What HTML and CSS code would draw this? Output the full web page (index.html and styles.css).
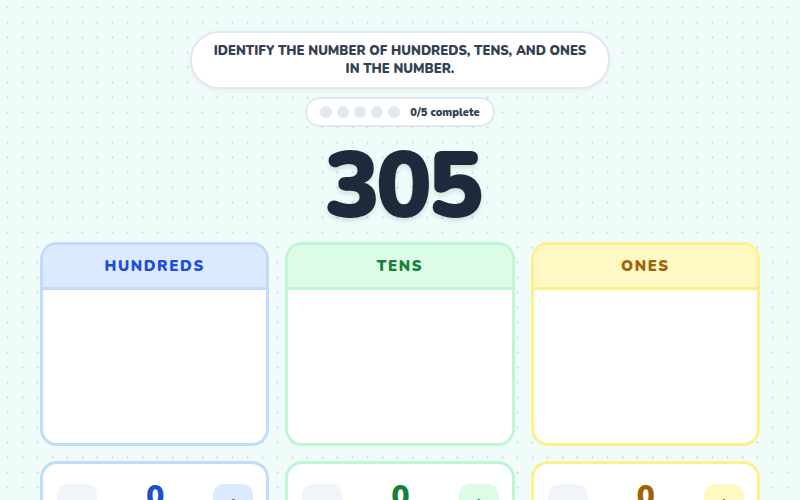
FILE: index.html
```html
<!DOCTYPE html>
<html lang="en">
<head>
<meta charset="utf-8">
<title>Place Value</title>
<link rel="stylesheet" href="styles.css">
</head>
<body>
<main class="page">
  <div class="prompt">Identify the number of hundreds, tens, and ones<br>in the number.</div>
  <div class="progress">
    <span class="dot"></span><span class="dot"></span><span class="dot"></span><span class="dot"></span><span class="dot"></span>
    <span class="progress-text">0/5 complete</span>
  </div>
  <div class="number">305</div>
  <section class="columns">
    <div class="col col-blue">
      <div class="card">
        <div class="card-head">Hundreds</div>
        <div class="card-body"></div>
      </div>
      <div class="counter">
        <button class="btn btn-minus">−</button>
        <span class="count">0</span>
        <button class="btn btn-plus">+</button>
      </div>
    </div>
    <div class="col col-green">
      <div class="card">
        <div class="card-head">Tens</div>
        <div class="card-body"></div>
      </div>
      <div class="counter">
        <button class="btn btn-minus">−</button>
        <span class="count">0</span>
        <button class="btn btn-plus">+</button>
      </div>
    </div>
    <div class="col col-yellow">
      <div class="card">
        <div class="card-head">Ones</div>
        <div class="card-body"></div>
      </div>
      <div class="counter">
        <button class="btn btn-minus">−</button>
        <span class="count">0</span>
        <button class="btn btn-plus">+</button>
      </div>
    </div>
  </section>
</main>
</body>
</html>
```

FILE: styles.css
```css
html, body {
  margin: 0;
  padding: 0;
}
body {
  width: 800px;
  height: 500px;
  overflow: hidden;
  background-color: #effcf9;
  background-image: radial-gradient(circle at 7.5px 7.5px, #c9e2dc 0.9px, transparent 1.4px);
  background-size: 15px 15px;
  font-family: "Nunito", Lato, "Noto Sans", sans-serif;
  color: #334155;
}
.page {
  width: 720px;
  margin: 0 auto;
  padding-top: 31px;
  display: flex;
  flex-direction: column;
  align-items: center;
}
.prompt {
  width: 420px;
  box-sizing: border-box;
  height: 58px;
  padding: 9px 10px;
  background: #ffffff;
  border: 2px solid #e2e8f0;
  border-radius: 30px;
  box-shadow: 0 2px 4px rgba(15, 23, 42, 0.04);
  text-transform: uppercase;
  text-align: center;
  font-size: 13px;
  font-weight: 900;
  line-height: 18px;
  letter-spacing: 0;
  color: #334155;
  white-space: nowrap;
}
.progress {
  margin-top: 8px;
  height: 30px;
  box-sizing: border-box;
  padding: 0 13px 0 13px;
  display: flex;
  align-items: center;
  gap: 5px;
  background: #ffffff;
  border: 2px solid #e2e8f0;
  border-radius: 16px;
}
.dot {
  width: 12px;
  height: 12px;
  border-radius: 50%;
  background: #e2e8f0;
}
.progress-text {
  margin-left: 5px;
  font-size: 11px;
  font-weight: 900;
  color: #334155;
}
.number {
  margin-top: 8px;
  height: 107px;
  font-size: 93px;
  line-height: 104px;
  font-weight: 900;
  color: #1e293b;
  text-shadow: 0 3px 4px rgba(15, 23, 42, 0.12);
  letter-spacing: -4px;
  padding-left: 4px;
}
.columns {
  width: 720px;
  display: grid;
  grid-template-columns: repeat(3, 1fr);
  gap: 16px;
}
.col {
  display: flex;
  flex-direction: column;
  gap: 15px;
}
.card {
  height: 204px;
  box-sizing: border-box;
  border: 3px solid var(--line);
  border-radius: 17px;
  background: #ffffff;
  overflow: hidden;
  display: flex;
  flex-direction: column;
}
.card-head {
  height: 42px;
  flex: none;
  background: var(--tint);
  border-bottom: 3px solid var(--line);
  display: flex;
  align-items: center;
  justify-content: center;
  text-transform: uppercase;
  font-size: 15px;
  font-weight: 900;
  letter-spacing: 1.6px;
  color: var(--ink);
}
.card-body {
  flex: 1;
}
.counter {
  height: 39px;
  box-sizing: border-box;
  border: 3px solid var(--line);
  border-bottom: none;
  border-radius: 17px 17px 0 0;
  background: #ffffff;
  padding: 20px 13px 0 14px;
  display: flex;
  align-items: flex-start;
  justify-content: space-between;
  overflow: hidden;
}
.btn {
  width: 40px;
  height: 40px;
  flex: none;
  border: none;
  border-radius: 11px;
  font-family: inherit;
  font-size: 22px;
  font-weight: 900;
  line-height: 40px;
  padding: 0;
}
.btn-minus {
  background: #f1f5f9;
  color: #cbd5e1;
}
.btn-plus {
  background: var(--tint);
  color: var(--ink);
}
.count {
  margin-top: -7px;
  font-size: 30px;
  font-weight: 900;
  line-height: 40px;
  color: var(--ink);
}
.col-blue { --line: #bfdbfe; --tint: #dbeafe; --ink: #1d4ed8; }
.col-green { --line: #bbf7d0; --tint: #dcfce7; --ink: #15803d; }
.col-yellow { --line: #fef08a; --tint: #fef9c3; --ink: #a16207; }
```
